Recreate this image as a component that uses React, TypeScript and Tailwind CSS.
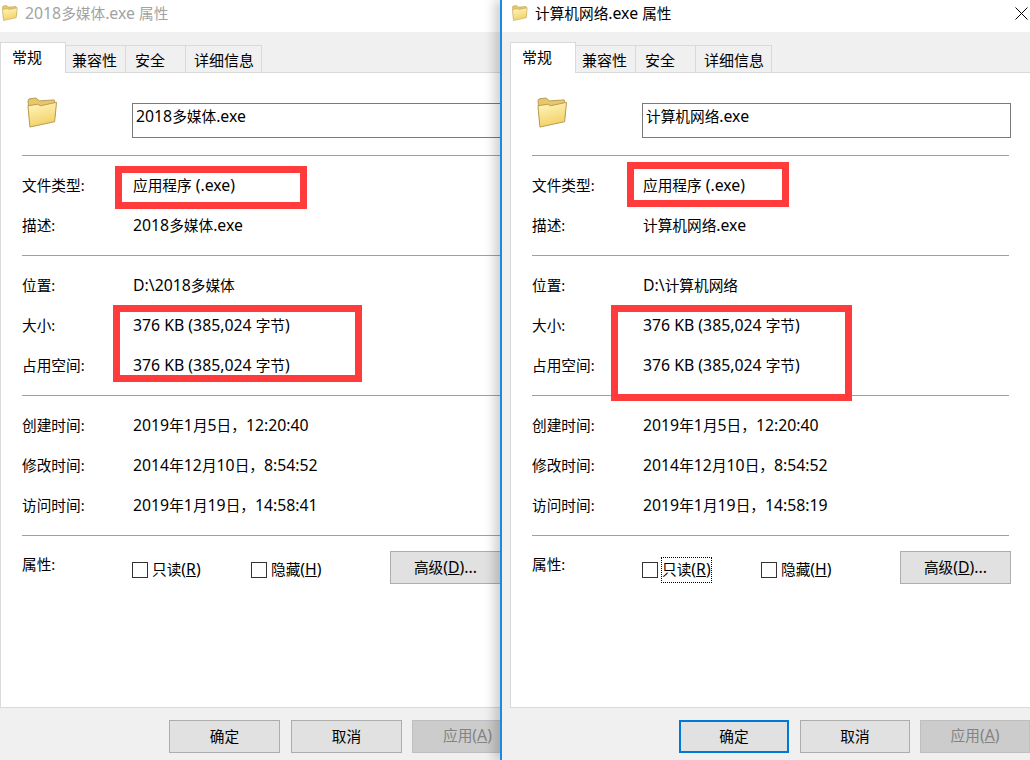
import type { ReactNode } from "react";

const font = "font-['Noto_Sans','Noto_Sans_CJK_SC',sans-serif]";

interface WindowProps {
  name: string;
  folder: string;
  accessed: string;
  active?: boolean;
}

// latin runs are a touch wider in the reference than the cjk ones
function T({ text }: { text: string }) {
  return (
    <>
      {text.split(/([\u4e00-\u9fff\uff0c]+)/).map((part, i) =>
        i % 2 === 1 ? (
          <span key={i} className="text-[14.67px]">{part}</span>
        ) : (
          <span key={i}>{part}</span>
        ),
      )}
    </>
  );
}

function FolderIcon({ className }: { className: string }) {
  return (
    <svg viewBox="0 0 32 32" className={className}>
      <defs>
        <linearGradient id="folderFront" x1="0.2" y1="0" x2="0.5" y2="1">
          <stop offset="0" stopColor="#fff5bd" />
          <stop offset="1" stopColor="#f3cf63" />
        </linearGradient>
      </defs>
      <path d="M1 4 L2 2 L9 1 L13 4 L28 3 L29 6 L29 20 L3 27 Z" fill="#e8c768" stroke="#b49a58" strokeWidth="1" />
      <path d="M1 9 L11 7.5 L14 9 L30.5 5.5 L28.5 25.5 L3 31 Z" fill="url(#folderFront)" stroke="#b89a50" strokeWidth="1" />
    </svg>
  );
}

function Row({ label, value }: { label: string; value: string }) {
  return (
    <div className="flex h-10 items-center">
      <span className="w-[111px] shrink-0 text-[14.67px]">{label}</span>
      <span className="pt-px"><T text={value} /></span>
    </div>
  );
}

function Divider() {
  return <div className="h-px bg-[#a0a0a0]" />;
}

function Checkbox({ label, hotkey, focused, width }: { label: string; hotkey: string; focused?: boolean; width: string }) {
  return (
    <span className={`flex items-center gap-[4px] ${width}`}>
      <span className="h-4 w-4 shrink-0 border border-[#333333] bg-white" />
      <span className={focused ? "outline-1 outline-dotted outline-black" : ""}>
        <span className="text-[14.67px]">{label}</span>(<u>{hotkey}</u>)
      </span>
    </span>
  );
}

function DialogButton({ children, primary, disabled }: { children: ReactNode; primary?: boolean; disabled?: boolean }) {
  let tone = "border border-[#adadad] bg-[#e1e1e1] text-black";
  if (primary) tone = "border-2 border-[#0078d7] bg-[#e1e1e1] text-black";
  if (disabled) tone = "ml-[-1px] border border-[#bfbfbf] bg-[#cccccc] text-[#838383]";
  return <div className={`flex h-[33px] w-[111px] items-center justify-center pb-[2px] ${tone}`}>{children}</div>;
}

function PropertiesWindow({ name, folder, accessed, active }: WindowProps) {
  return (
    <div className="flex h-full flex-col bg-[#f0f0f0] text-black">
      <div className="flex h-8 shrink-0 items-start bg-white">
        <FolderIcon className="mt-[5px] ml-[2px] h-[16px] w-[16px] shrink-0" />
        <span className={`mt-[2px] ml-[7px] ${active ? "text-black" : "text-[#a3a3a3]"}`}><T text={`${name} 属性`} /></span>
      </div>
      <div className="flex h-[40px] shrink-0 items-end text-[15px]">
        <div className="relative z-10 mb-[-1px] flex h-[31px] w-[66px] items-start border border-b-0 border-[#d9d9d9] bg-white pt-[3px] pl-[11px]">常规</div>
        <div className="flex h-[27px] w-[60px] items-start border border-b-0 border-l-0 border-[#d9d9d9] bg-[#f0f0f0] pt-[3px] pl-[6px]">兼容性</div>
        <div className="flex h-[27px] w-[60px] items-start border border-b-0 border-l-0 border-[#d9d9d9] bg-[#f0f0f0] pt-[3px] pl-[9px]">安全</div>
        <div className="flex h-[27px] w-[76px] items-start border border-b-0 border-l-0 border-[#d9d9d9] bg-[#f0f0f0] pt-[3px] pl-[8px]">详细信息</div>
      </div>
      <div className="h-[636px] shrink-0 border border-r-0 border-[#d9d9d9] bg-white pt-[30px] pr-[21px] pl-[21px]">
        <div className="flex h-[52px] items-start">
          <FolderIcon className="mt-[-6px] ml-[5px] h-[31px] w-[31px] shrink-0" />
          <div className="ml-[74px] h-[35px] w-[369px] shrink-0 border border-[#7a7a7a] px-[3px] pt-[1px]"><T text={name} /></div>
        </div>
        <Divider />
        <div className="pt-[9px] pb-[10px]">
          <Row label="文件类型:" value="应用程序 (.exe)" />
          <Row label="描述:" value={name} />
        </div>
        <Divider />
        <div className="pt-[9px] pb-[10px]">
          <Row label="位置:" value={`D:\\${folder}`} />
          <Row label="大小:" value="376 KB (385,024 字节)" />
          <Row label="占用空间:" value="376 KB (385,024 字节)" />
        </div>
        <Divider />
        <div className="pt-[9px] pb-[10px]">
          <Row label="创建时间:" value={"2019年1月5日\uff0c12:20:40"} />
          <Row label="修改时间:" value={"2014年12月10日\uff0c8:54:52"} />
          <Row label="访问时间:" value={accessed} />
        </div>
        <Divider />
        <div className="flex pt-[15px]">
          <span className="w-[110px] shrink-0 pt-[2px] text-[14.67px]">属性:</span>
          <div className="flex pt-[5px]">
            <Checkbox label="只读" hotkey="R" focused={active} width="w-[119px]" />
            <Checkbox label="隐藏" hotkey="H" width="w-[139px]" />
          </div>
          <div className="flex h-[33px] w-[111px] shrink-0 items-center justify-center border border-[#adadad] bg-[#e1e1e1]">
            <span><span className="text-[14.67px]">高级</span>(<u>D</u>)...</span>
          </div>
        </div>
      </div>
      <div className="flex justify-start gap-[11px] pt-[12px] pl-[169px]">
        <DialogButton primary={active}><span className="text-[14.67px]">确定</span></DialogButton>
        <DialogButton><span className="text-[14.67px]">取消</span></DialogButton>
        <DialogButton disabled>
          <span><span className="text-[14.67px]">应用</span>(<u>A</u>)</span>
        </DialogButton>
      </div>
    </div>
  );
}

export default function App() {
  return (
    <div className={`${font} relative flex h-[760px] w-[1030px] overflow-hidden bg-white text-[15.8px]`}>
      <div className="h-full w-[500px] shrink-0 overflow-hidden">
        <div className="h-full w-[530px]">
          <PropertiesWindow name="2018多媒体.exe" folder="2018多媒体" accessed={"2019年1月19日\uff0c14:58:41"} />
        </div>
      </div>
      <div className="relative z-20 h-full w-[530px] shrink-0 border-l-2 border-[#1a8ae5] bg-[#f0f0f0] pl-[8px] shadow-[-6px_0_10px_rgba(0,0,0,0.18)]">
        <div className="absolute top-0 right-0 left-0 h-8 bg-white" />
        <div className="relative h-full">
          <PropertiesWindow name="计算机网络.exe" folder="计算机网络" accessed={"2019年1月19日\uff0c14:58:19"} active />
        </div>
      </div>
      <div className="absolute top-[166px] left-[115px] z-30 h-[43px] w-[192px] border-[7px] border-[#ff3b3b]" />
      <div className="absolute top-[305px] left-[113px] z-30 h-[77px] w-[249px] border-[7px] border-[#ff3b3b]" />
      <div className="absolute top-[162px] left-[627px] z-30 h-[45px] w-[162px] border-[7px] border-[#ff3b3b]" />
      <div className="absolute top-[305px] left-[611px] z-30 h-[96px] w-[241px] border-[7px] border-[#ff3b3b]" />
      <svg viewBox="0 0 13 13" className="absolute top-[7px] left-[1015px] z-30 h-[13px] w-[13px]" stroke="black" strokeWidth="1" fill="none">
        <path d="M0.5 0.5 L12.5 12.5 M12.5 0.5 L0.5 12.5" />
      </svg>
    </div>
  );
}
